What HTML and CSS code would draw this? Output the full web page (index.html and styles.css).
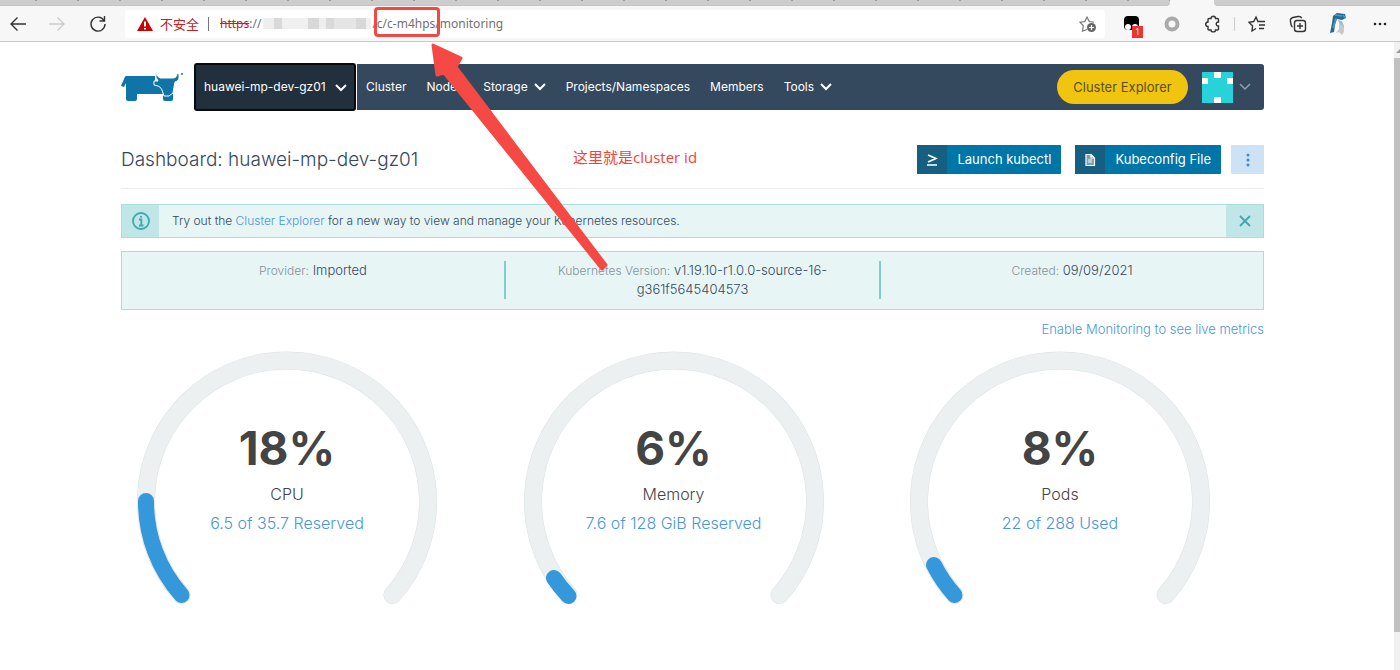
FILE: index.html
```html
<!DOCTYPE html>
<html lang="en">
<head>
<meta charset="utf-8">
<title>Dashboard: huawei-mp-dev-gz01</title>
<link rel="stylesheet" href="styles.css">
</head>
<body>
<div class="tabs"><div class="tabs-left"></div><div class="tabs-right"></div></div>
<div class="toolbar">
  <button class="tool" aria-label="Back"><svg width="18" height="18" viewBox="0 0 18 18"><path d="M17 9H2M8.500 2.500 2 9l6.500 6.500"/></svg></button>
  <button class="tool disabled" aria-label="Forward"><svg width="18" height="18" viewBox="0 0 18 18"><path d="M1 9h15M9.500 2.500 16 9l-6.500 6.500"/></svg></button>
  <button class="tool" aria-label="Reload"><svg width="18" height="18" viewBox="0 0 18 18"><path d="M15 5.500A7 7 0 1 0 16 9M15.500 1v5h-5"/></svg></button>
  <div class="address">
    <svg class="warn" width="16" height="16" viewBox="0 0 16 16"><path d="M8 1 16 15H0z"/><path class="mark" d="M8 5.500v5M8 12v1.500"/></svg>
    <span class="unsafe">不安全</span>
    <span class="pipe"></span>
    <span class="scheme">https</span><span class="slashes">://</span><span class="mosaic"></span>
    <input class="url" type="text" aria-label="Address" value="/c/c-m4hps/monitoring">
    <button class="star" aria-label="Add to favorites"><svg width="18" height="18" viewBox="0 0 18 18"><path d="M8 14.500 3.500 16l.8-5.200L1 7.300l4.800-.8L8 2l2.200 4.500 4.600.7"/><circle class="solid" cx="12.500" cy="12.500" r="4.500"/><path class="plus" d="M12.500 10v5M10 12.500h5"/></svg></button>
  </div>
  <div class="extensions">
    <button class="tool" aria-label="Extension, 1 notification"><svg width="22" height="22" viewBox="0 0 22 22"><rect x="4" y="3" width="15" height="14" rx="4" fill="#000" stroke="none"/><circle cx="8" cy="14" r="3" fill="#fff" stroke="none"/><circle cx="15" cy="14" r="3" fill="#fff" stroke="none"/></svg><span class="badge">1</span></button>
    <button class="tool" aria-label="Extension"><svg width="18" height="18" viewBox="0 0 18 18"><circle cx="9" cy="9" r="5.500" stroke="#aaa" stroke-width="4"/></svg></button>
    <button class="tool" aria-label="Extensions"><svg width="18" height="18" viewBox="0 0 18 18"><path d="M5 3.500h2c0-3 4.500-3 4.500 0h2q1 0 1 1V7c-3-.5-3 4.500 0 4v3q0 1-1 1h-2c0 2.500-4.500 2.500-4.500 0H5q-1 0-1-1v-2.500c-3 0-3-4.500 0-4.500V4.500q0-1 1-1z"/></svg></button>
    <span class="divider"></span>
    <button class="tool" aria-label="Favorites"><svg width="18" height="18" viewBox="0 0 18 18"><path d="M8 13.500 4 16l.6-5L1 7.300l4.700-.8L8 2l2 4.500h7M11 10h6M11 13.500h5"/></svg></button>
    <button class="tool" aria-label="Collections"><svg width="18" height="18" viewBox="0 0 18 18"><rect x="5.500" y="5.500" width="11" height="11" rx="2.500"/><path d="M11 8v6M8 11h6M3.500 12C2 11.500 2 10 1.500 6.500 1 4 2 3 4 2.500l5-1c2-.3 3 0 3.700 1.700"/></svg></button>
    <button class="tool" aria-label="Profile"><svg width="20" height="24" viewBox="0 0 20 24"><path d="M4 4 8 1l8 1 1 4-4 2-5-1-2 6-1 7-4 1 2-10z" fill="#27698f" stroke="none"/><path d="m9 8 4 1 2 5-1 7-2-5z" fill="#9bbfd5" stroke="none"/><path d="m10 12 4 2 1 6-2 3-3-3-3 1 3-4z" fill="#c8c8ca" stroke="none"/><path d="m6 3 7 1M7 6 4 16M14 3l2 3" stroke="#4c9cc8"/></svg></button>
    <button class="tool" aria-label="Settings and more"><svg width="16" height="16" viewBox="0 0 16 16"><g fill="#222" stroke="none"><circle cx="3" cy="8" r="1.300"/><circle cx="8" cy="8" r="1.300"/><circle cx="13" cy="8" r="1.300"/></g></svg></button>
  </div>
</div>
<div class="viewport">
  <div class="page">
    <header class="header">
      <a class="logo" href="#" aria-label="Rancher"><svg width="63" height="32" viewBox="0 0 63 32"><path d="M5 5h29v6q0 3 3 3h4l11 2v12q0 2-2 2h-6q-2 0-2-2v-5H16v5q0 2-2 2H7q-2 0-2-2V12l-2 4-3-1 3-7q1-3 2-3z"/><path class="head" d="M35 1q1 5 4 6h13q4 0 4-5l2 1q1 7-4 8l-1 5-1 6-4 3h-5l-2-6q-1-3-4-4l-4-1v-4h4q-3-3-2-9z"/><circle cx="61" cy="3" r="1"/></svg></a>
      <button class="switcher">huawei-mp-dev-gz01<svg class="chev" width="12" height="12" viewBox="0 0 12 12"><path d="m1 4 5 5 5-5"/></svg></button>
      <nav class="nav">
        <a href="#">Cluster</a>
        <a href="#">Nodes</a>
        <a href="#">Storage<svg class="chev" width="12" height="12" viewBox="0 0 12 12"><path d="m1 3 5 5 5-5"/></svg></a>
        <a href="#">Projects/Namespaces</a>
        <a href="#">Members</a>
        <a href="#">Tools<svg class="chev" width="12" height="12" viewBox="0 0 12 12"><path d="m1 3 5 5 5-5"/></svg></a>
        <a class="explorer" href="#">Cluster Explorer</a>
        <button class="user" aria-label="User menu"><svg width="31" height="31" viewBox="0 0 31 31"><path fill="#27d3d9" d="M0 0h31v31H0z"/><path fill="#fff" d="M12 0h7v6h-7zM0 6h6v6H0zM25 6h6v6h-6zM12 25h7v6h-7z"/></svg><svg class="chev thin" width="12" height="12" viewBox="0 0 12 12"><path d="m1 3 5 5 5-5"/></svg></button>
      </nav>
    </header>
    <main>
      <div class="heading">
        <h1>Dashboard: huawei-mp-dev-gz01</h1>
        <button class="action"><span class="action-icon"><svg width="12" height="12" viewBox="0 0 12 12"><path d="m2 1 8 3.500L2 8M1 11h10"/></svg></span><span class="action-label">Launch kubectl</span></button>
        <button class="action"><span class="action-icon"><svg width="12" height="12" viewBox="0 0 12 12"><path class="sheet" d="M2 .5h5L10.500 4v7.500H2zM7 .5V4h3M4 6h4M4 8h4"/></svg></span><span class="action-label">Kubeconfig File</span></button>
        <button class="more" aria-label="More actions"><svg width="4" height="14" viewBox="0 0 4 14"><circle cx="2" cy="2" r="1.500"/><circle cx="2" cy="7" r="1.500"/><circle cx="2" cy="12" r="1.500"/></svg></button>
      </div>
      <div class="banner">
        <span class="banner-icon"><svg width="20" height="20" viewBox="0 0 20 20"><circle cx="10" cy="10" r="8"/><path d="M8 8.500h2.300v6M8 14.500h4.500M10 5v1.800"/></svg></span>
        <p>Try out the <a href="#">Cluster Explorer</a> for a new way to view and manage your Kubernetes resources.</p>
        <button class="banner-close" aria-label="Close"><svg width="12" height="12" viewBox="0 0 12 12"><path d="m1 1 10 10M11 1 1 11"/></svg></button>
      </div>
      <dl class="facts">
        <div><dt>Provider:</dt> <dd>Imported</dd></div>
        <div><dt>Kubernetes Version:</dt> <dd>v1.19.10-r1.0.0-source-16-<br>g361f5645404573</dd></div>
        <div><dt>Created:</dt> <dd>09/09/2021</dd></div>
      </dl>
      <a class="enable" href="#">Enable Monitoring to see live metrics</a>
      <div class="gauges">
        <section class="gauge">
          <svg viewBox="0 0 300 256"><path class="edge" d="M44.500 244A141 141 0 1 1 255.500 244"/><path class="track" d="M44.500 244A141 141 0 1 1 255.500 244"/><path class="fill" d="M44.500 244A141 141 0 0 1 9 150"/></svg>
          <div class="reading"><strong>18%</strong><span>CPU</span><a href="#">6.5 of 35.7 Reserved</a></div>
        </section>
        <section class="gauge">
          <svg viewBox="0 0 300 256"><path class="edge" d="M44.500 244A141 141 0 1 1 255.500 244"/><path class="track" d="M44.500 244A141 141 0 1 1 255.500 244"/><path class="fill" d="M44.500 245A141 141 0 0 1 30 227"/></svg>
          <div class="reading"><strong>6%</strong><span>Memory</span><a href="#">7.6 of 128 GiB Reserved</a></div>
        </section>
        <section class="gauge">
          <svg viewBox="0 0 300 256"><path class="edge" d="M44.500 244A141 141 0 1 1 255.500 244"/><path class="track" d="M44.500 244A141 141 0 1 1 255.500 244"/><path class="fill" d="M44.500 244A141 141 0 0 1 24 214"/></svg>
          <div class="reading"><strong>8%</strong><span>Pods</span><a href="#">22 of 288 Used</a></div>
        </section>
      </div>
    </main>
  </div>
  <div class="scrollbar"><div class="scroll-up"></div><div class="thumb"></div></div>
</div>
<div class="highlight"></div>
<svg class="arrow" width="180" height="232" viewBox="0 0 180 232"><path d="M4 4 32 17 27 26 177 224 173 228 15 32 8 34z"/></svg>
<p class="note">这里就是cluster id</p>
</body>
</html>
```
FILE: styles.css
```css
* { box-sizing: border-box; }
body {
  margin: 0;
  min-height: 100vh;
  display: flex;
  flex-direction: column;
  position: relative;
  background: #fff;
  color: #34495e;
  font: 300 13px/20px Inter, "Liberation Sans", sans-serif;
}
button { border: 0; padding: 0; background: none; font: inherit; color: inherit; cursor: pointer; }
a { color: #4a96dc; text-decoration: none; }
p, h1, dl, dd { margin: 0; }
svg { display: block; flex: none; fill: none; }

/* Browser chrome */
.tabs { display: flex; height: 6px; background: #f7f7f7; justify-content: space-between; }
.tabs-left {
  width: calc(100% - 230px);
  background: repeating-linear-gradient(90deg, transparent 0 35px, #999 35px 37px, transparent 37px 42px) 0 0 / 100% 1px no-repeat #cdcdcd;
  border-bottom: 1px solid #c4c4c4;
  border-radius: 0 0 4px 0;
}
.tabs-right { width: 186px; background: #cdcdcd; border-bottom: 1px solid #c4c4c4; border-radius: 0 0 0 4px; }
.toolbar {
  display: flex;
  align-items: center;
  height: 36px;
  background: #f7f7f7;
  border-bottom: 1px solid #c8c8c8;
}
.tool {
  position: relative;
  display: flex;
  align-items: center;
  justify-content: center;
  width: 41px;
  height: 28px;
}
.tool svg { stroke: #333; stroke-width: 1.4; }
.toolbar > .tool:first-child { width: 36px; }
.disabled svg { stroke: #ccc; }
.address {
  flex: 1;
  display: flex;
  align-items: center;
  height: 28px;
  margin-left: 7px;
  padding: 0 8px 0 12px;
  background: #fff;
  border-radius: 3px;
  font: 400 12px/20px "Noto Sans", "Noto Sans CJK SC", sans-serif;
  color: #717171;
}
.warn path { fill: #c80000; }
.warn .mark { stroke: #fff; stroke-width: 2; }
.unsafe { margin-left: 7px; color: #c5221f; font-size: 13px; }
.pipe { width: 1px; height: 14px; margin: 0 11px 0 9px; background: #777; }
.scheme { color: #c5221f; text-decoration: line-through; }
.mosaic {
  width: 108px;
  height: 11px;
  margin: 0 1px 0 2px;
  background: linear-gradient(90deg, #eee 0 10%, #d9d9d9 10% 18%, #f0f0f0 18% 42%, #d8d8d8 42% 52%, #eee 52% 58%, #d9d9d9 58% 66%, #e5e5e5 66% 86%, #d8d8d8 86% 95%, #f0f0f0 95%);
}
.url { flex: 1; min-width: 0; border: 0; padding: 0; outline: 0; background: none; font: inherit; color: inherit; }
.star svg { stroke: #777; stroke-width: 1.2; }
.star .solid { fill: #666; stroke: none; }
.star .plus { stroke: #fff; }
.extensions { display: flex; align-items: center; width: 295px; padding-left: 5px; }
.divider { width: 1px; height: 14px; margin: 0 1px; background: #ccc; }
.badge {
  position: absolute;
  right: 8px;
  bottom: 0;
  width: 11px;
  height: 12px;
  background: #e33;
  color: #fff;
  font: 400 9px/12px "Open Sans", sans-serif;
}

/* Page frame */
.viewport { flex: 1; display: flex; }
.page { flex: 1; min-width: 0; padding: 21px 130px 24px 121px; }
.scrollbar { width: 6px; background: #f1f1f1; }
.scroll-up { height: 16px; }
.scroll-up::after { content: ""; display: block; margin: 0 0 0 2px; padding-top: 7px; border: solid transparent; border-width: 0 0 4px 4px; border-bottom-color: #999; }
.thumb { height: 574px; max-height: 92%; background: #c1c1c1; }

/* Navigation */
.header { display: flex; align-items: center; height: 48px; color: #fff; font-size: 12px; font-weight: 400; }
.logo { width: 73px; }
.logo path, .logo circle { fill: #0f75a8; }
.logo .head { stroke: #fff; stroke-width: 1; }
.switcher {
  display: flex;
  align-items: center;
  justify-content: space-between;
  width: 162px;
  height: 48px;
  padding: 0 7px 0 8px;
  background: #222f3c;
  border: 2px solid #070b10;
  border-radius: 3px;
  white-space: nowrap;
}
.chev { stroke: #fff; stroke-width: 2; }
.thin { stroke: #91a0ae; stroke-width: 1.5; }
.nav {
  flex: 1;
  display: flex;
  align-items: center;
  gap: 20px;
  height: 46px;
  margin-left: 1px;
  padding: 0 13px 0 9px;
  background: #34495e;
  border-radius: 0 3px 3px 0;
}
.nav a { display: flex; align-items: center; gap: 6px; color: #fff; }
.nav .explorer {
  justify-content: center;
  width: 131px;
  height: 34px;
  margin-left: auto;
  border-radius: 17px;
  background: #f1c40f;
  color: #59501c;
  font-size: 13px;
}
.user { display: flex; align-items: center; gap: 6px; margin-left: -6px; }

/* Heading */
.heading {
  display: flex;
  align-items: center;
  height: 58px;
  margin-top: 20px;
  border-bottom: 1px solid #e8eaec;
}
h1 { flex: 1; font-size: 19px; line-height: 28px; font-weight: 300; }
.action { display: flex; height: 29px; margin-right: 14px; background: #0075a8; color: #fff; border-radius: 1px; font-weight: 400; }
.action + .more { margin-left: -4px; }
.action-icon { display: flex; align-items: center; justify-content: center; width: 30px; height: 29px; background: #155f80; }
.action-icon svg { stroke: #fff; stroke-width: 1.7; }
.action-icon .sheet { fill: #799fb0; stroke-width: 1.2; }
.action-label { padding: 0 10px; line-height: 29px; }
.more { display: flex; align-items: center; justify-content: center; width: 33px; height: 29px; background: #cce3f5; border-radius: 1px; }
.more svg { fill: #3f86c5; }

/* Notices */
.banner {
  display: flex;
  align-items: center;
  height: 34px;
  margin-top: 15px;
  background: #e7f5f5;
  border: 1px solid #a9dde0;
}
.banner p { flex: 1; padding-left: 13px; font-size: 12px; }
.banner-icon, .banner-close { display: flex; align-items: center; justify-content: center; width: 37px; height: 32px; background: #c1e6e7; }
.banner svg { stroke: #3fa9af; stroke-width: 1.8; }
.facts {
  display: grid;
  grid-template-columns: 382px 1fr 384px;
  margin-top: 13px;
  padding: 9px 0 10px;
  background: #e7f5f5;
  border: 1px solid #a9dde0;
  text-align: center;
  line-height: 19px;
}
.facts div + div { border-left: 2px solid #7fcdcd; }
dt, dd { display: inline; }
dt { font-size: 12px; color: #82939d; }
.enable { display: block; width: max-content; margin: 9px 0 0 auto; }

/* Gauges */
.gauges { display: flex; justify-content: space-between; margin-top: 12px; padding: 0 54px 0 16px; }
.gauge { display: grid; width: 28%; max-width: 300px; }
.gauge > * { grid-area: 1 / 1; }
.gauge svg { width: 100%; stroke-linecap: round; }
.edge { stroke: #dde1e2; stroke-width: 18; }
.track { stroke: #ecf0f1; stroke-width: 17; }
.fill { stroke: #3498db; stroke-width: 16; }
.reading { display: flex; flex-direction: column; align-items: center; padding-top: 65px; font-size: 16px; line-height: 29px; color: #444; }
.reading strong { font-size: 46px; line-height: 64px; font-weight: 700; }

/* Annotations */
.highlight { position: absolute; left: 374px; top: 7px; width: 66px; height: 30px; border: 3px solid #ef4a45; border-radius: 4px; }
.arrow { position: absolute; left: 429px; top: 41px; pointer-events: none; }
.arrow path { fill: #f44944; stroke: #f44944; stroke-width: 3; stroke-linejoin: round; }
.note { position: absolute; left: 573px; top: 147px; color: #f44336; font: 400 15px/20px "Open Sans", "Noto Sans CJK SC", sans-serif; }
```
